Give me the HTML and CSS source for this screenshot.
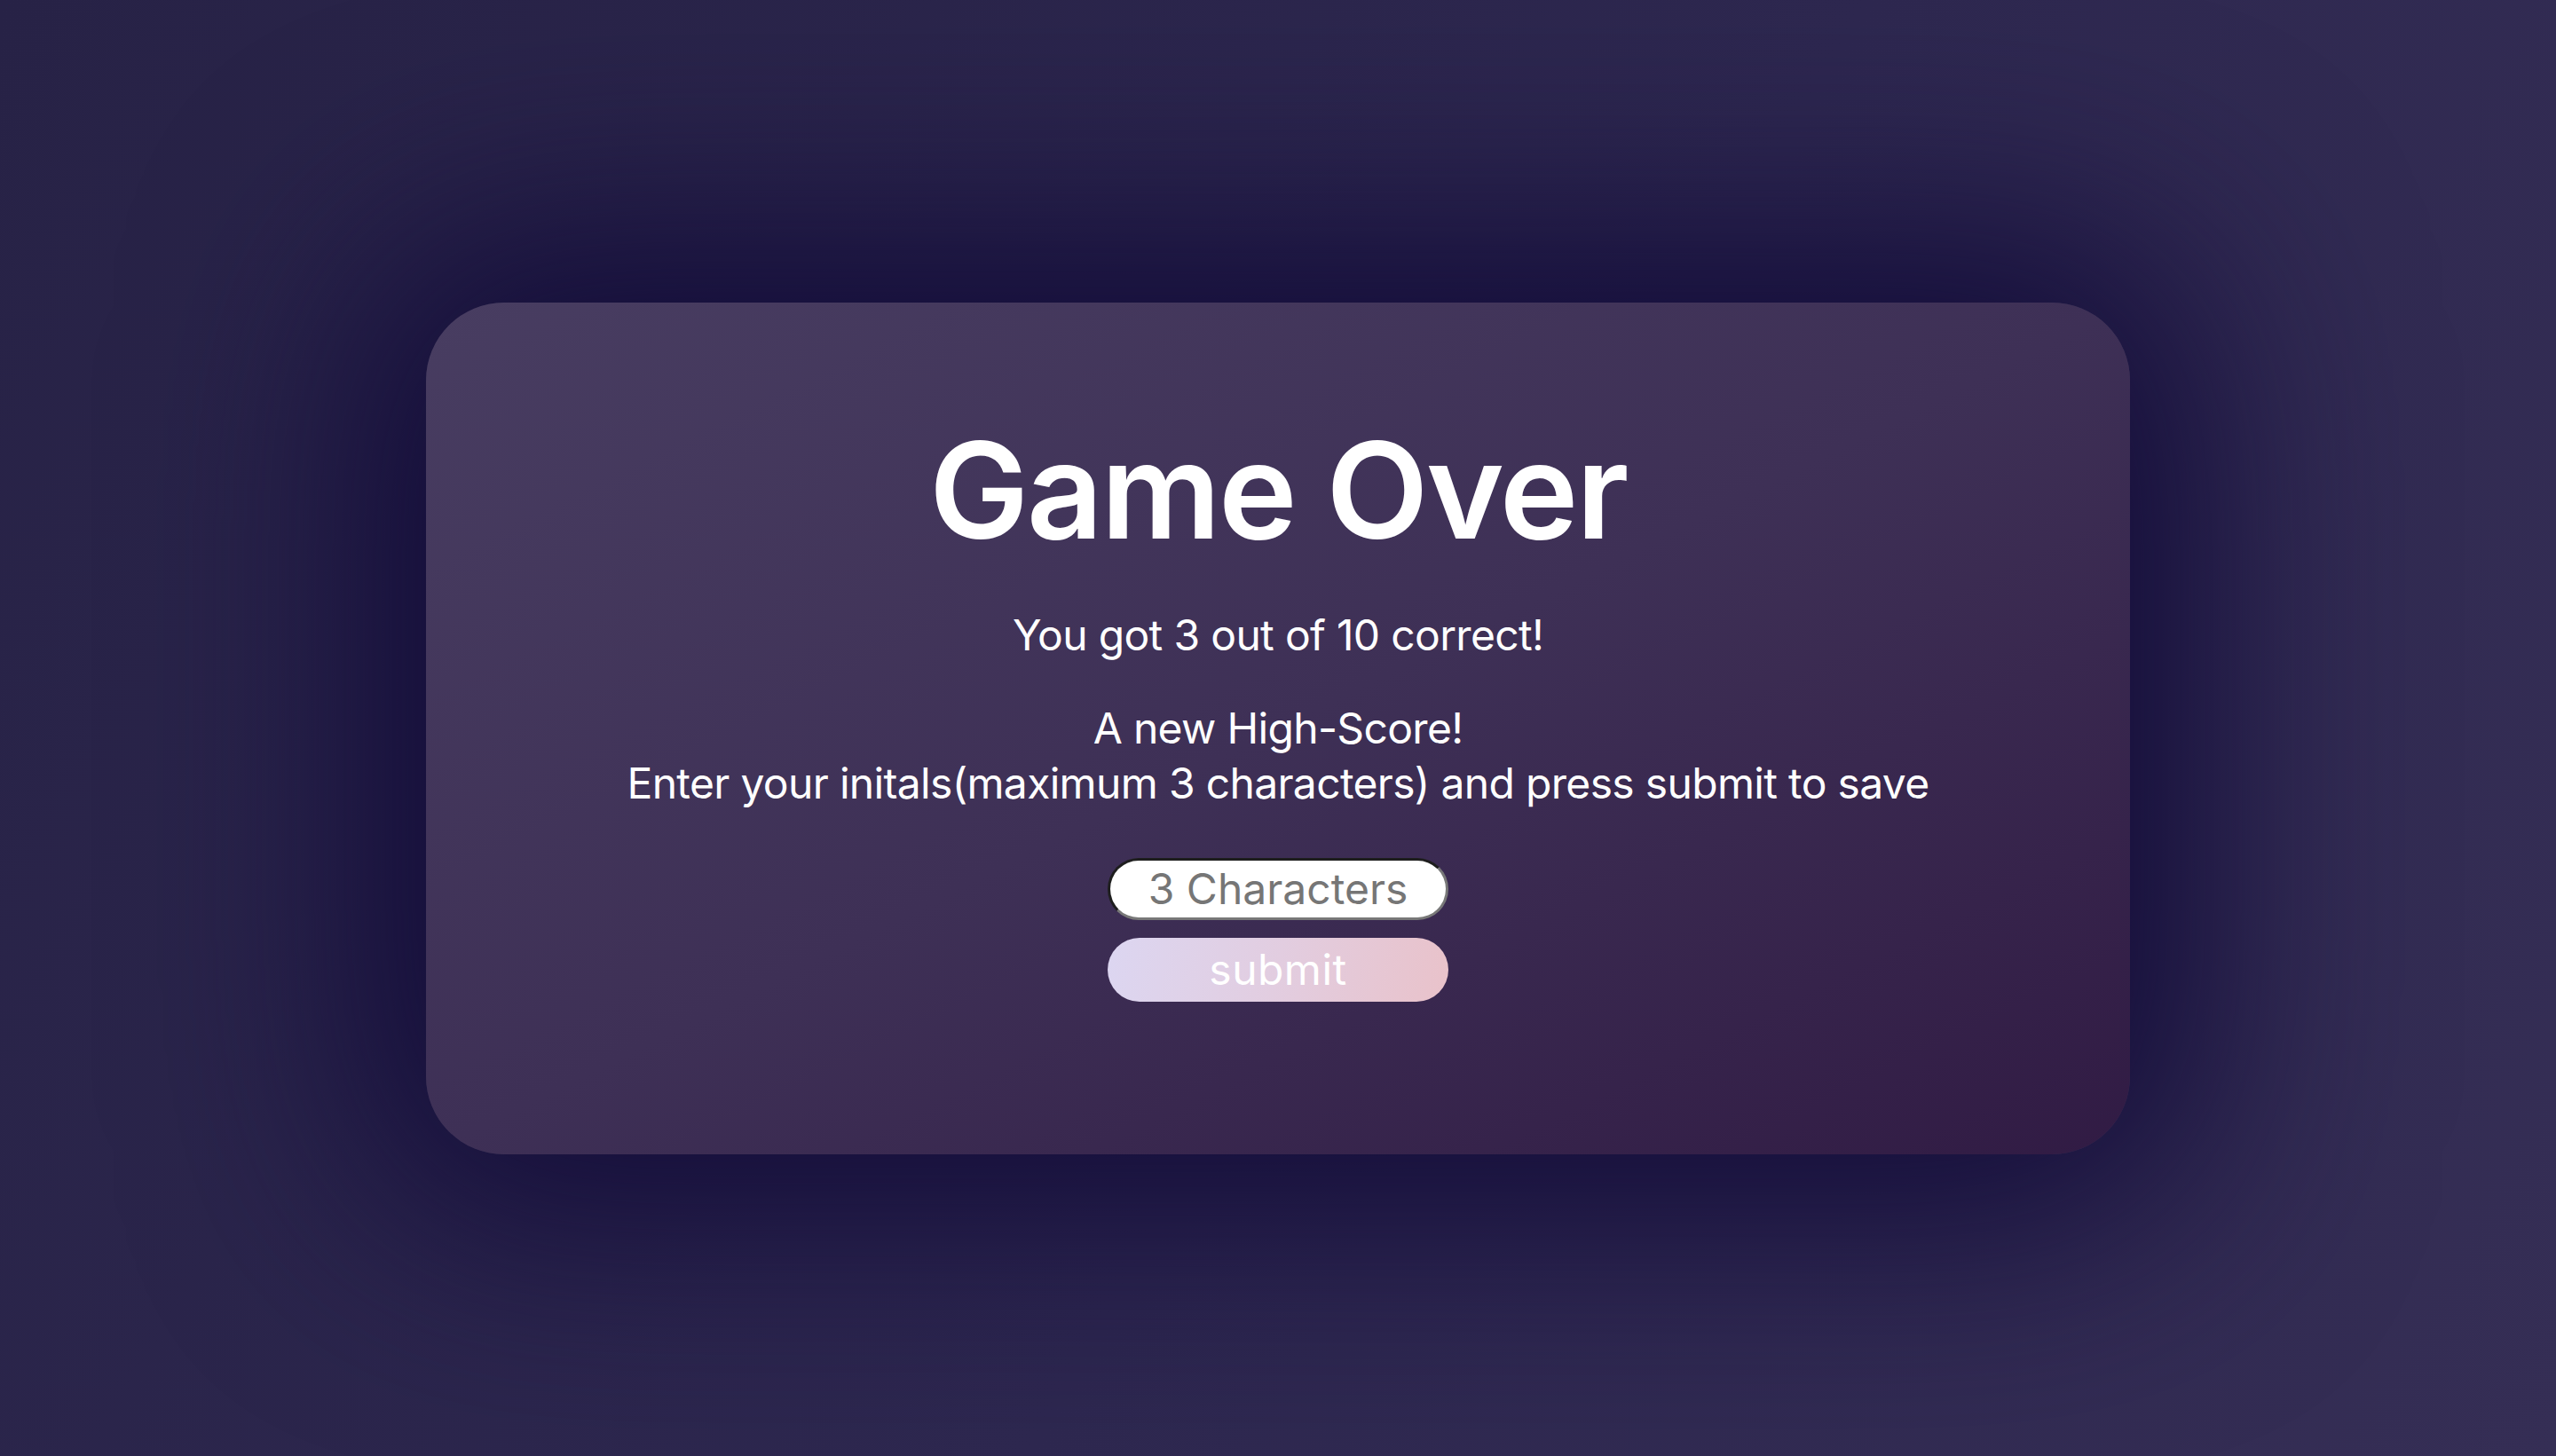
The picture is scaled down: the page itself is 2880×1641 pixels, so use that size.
FILE: index.html
```html
<!DOCTYPE html>
<html lang="en">
<head>
<meta charset="utf-8">
<title>Game Over</title>
<link rel="stylesheet" href="styles.css">
</head>
<body>
<main class="page">
  <section class="card">
    <h1 class="title">Game Over</h1>
    <p class="score">You got 3 out of 10 correct!</p>
    <p class="highscore">A new High-Score!<br>Enter your initals(maximum 3 characters) and press submit to save</p>
    <form class="save-form">
      <input class="initials" type="text" maxlength="3" placeholder="3 Characters">
      <button class="submit" type="button">submit</button>
    </form>
  </section>
</main>
</body>
</html>
```
FILE: styles.css
```css
* {
  box-sizing: border-box;
}

html, body {
  margin: 0;
  padding: 0;
  height: 100%;
}

body {
  font-family: Inter, "Liberation Sans", sans-serif;
  background: linear-gradient(120deg, #272246 0%, #2e2850 55%, #352e55 100%);
  color: #ffffff;
  overflow: hidden;
}

.page {
  height: 100vh;
  display: flex;
  align-items: center;
  justify-content: center;
}

.card {
  width: 1920px;
  height: 960px;
  border-radius: 88px;
  background: linear-gradient(to bottom right, #483d61 0%, #3e3056 50%, #311b44 100%);
  box-shadow: 0 0 320px 70px #120b39;
  display: flex;
  flex-direction: column;
  align-items: center;
  padding-top: 122px;
}

.title {
  margin: 0;
  font-size: 150px;
  line-height: 180px;
  font-weight: 600;
  letter-spacing: -0.017em;
}

.score,
.highscore {
  margin: 0;
  font-size: 48px;
  line-height: 62px;
  font-weight: 400;
  letter-spacing: -0.014em;
  text-align: center;
}

.score {
  margin-top: 42px;
}

.highscore {
  margin-top: 43px;
}

.save-form {
  margin-top: 53px;
  display: flex;
  flex-direction: column;
  gap: 20px;
}

.initials {
  width: 384px;
  height: 70px;
  padding: 0;
  border-radius: 36px;
  border-style: solid;
  border-width: 3px;
  border-color: #1e1e1e #787878 #787878 #1e1e1e;
  background: #ffffff;
  font-family: Inter, "Liberation Sans", sans-serif;
  font-size: 48px;
  letter-spacing: 0;
  text-align: center;
  color: #222;
}

.initials::placeholder {
  color: #767676;
}

.submit {
  width: 384px;
  height: 72px;
  padding: 0;
  border: none;
  border-radius: 36px;
  background: linear-gradient(100deg, #dcd6f1 0%, #e2cde0 50%, #e9c2ca 100%);
  color: #ffffff;
  font-family: Inter, "Liberation Sans", sans-serif;
  font-size: 48px;
  letter-spacing: 0.01em;
}
```
